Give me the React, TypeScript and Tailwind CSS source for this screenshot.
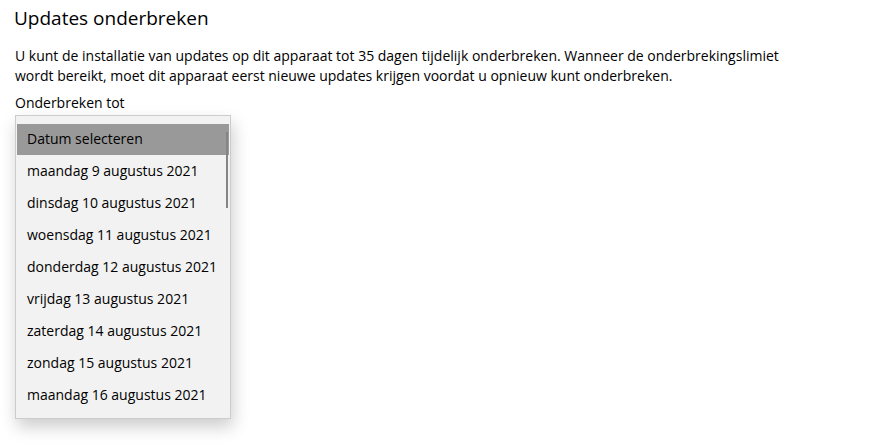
const dates = [
  "maandag 9 augustus 2021",
  "dinsdag 10 augustus 2021",
  "woensdag 11 augustus 2021",
  "donderdag 12 augustus 2021",
  "vrijdag 13 augustus 2021",
  "zaterdag 14 augustus 2021",
  "zondag 15 augustus 2021",
  "maandag 16 augustus 2021",
];

export default function App() {
  return (
    <div
      className="w-[884px] h-[447px] bg-white text-black overflow-hidden"
      style={{ fontFamily: '"Segoe UI", "Open Sans", sans-serif' }}
    >
      <div className="pl-[14px] pt-[4px]">
        <h1 className="text-[19px] leading-[28px] font-normal">Updates onderbreken</h1>
        <p className="mt-[14px] pl-[1px] text-[14px] leading-[20px] w-[800px]">
          U kunt de installatie van updates op dit apparaat tot 35 dagen tijdelijk onderbreken. Wanneer de onderbrekingslimiet
          <br />
          wordt bereikt, moet dit apparaat eerst nieuwe updates krijgen voordat u opnieuw kunt onderbreken.
        </p>
        <div className="mt-[7px] pl-[1px] text-[14px] leading-[20px]">Onderbreken tot</div>

        <div className="relative mt-[2px] ml-[1px] w-[216px] bg-[#f2f2f2] border border-[#cccccc] pt-[8px] pb-[6px] px-[1px] shadow-[2px_8px_16px_rgba(0,0,0,0.2)]">
          <div className="h-[31px] mb-[1px] bg-[#999999] pl-[10px] pb-[3px] flex items-center text-[14px]">
            Datum selecteren
          </div>
          {dates.map((d) => (
            <div key={d} className="h-[32px] pl-[10px] pb-[3px] flex items-center text-[14px]">
              {d}
            </div>
          ))}
          <div className="absolute left-[210px] top-[16px] w-[2px] h-[76px] bg-[#858585]" />
        </div>
      </div>
    </div>
  );
}
